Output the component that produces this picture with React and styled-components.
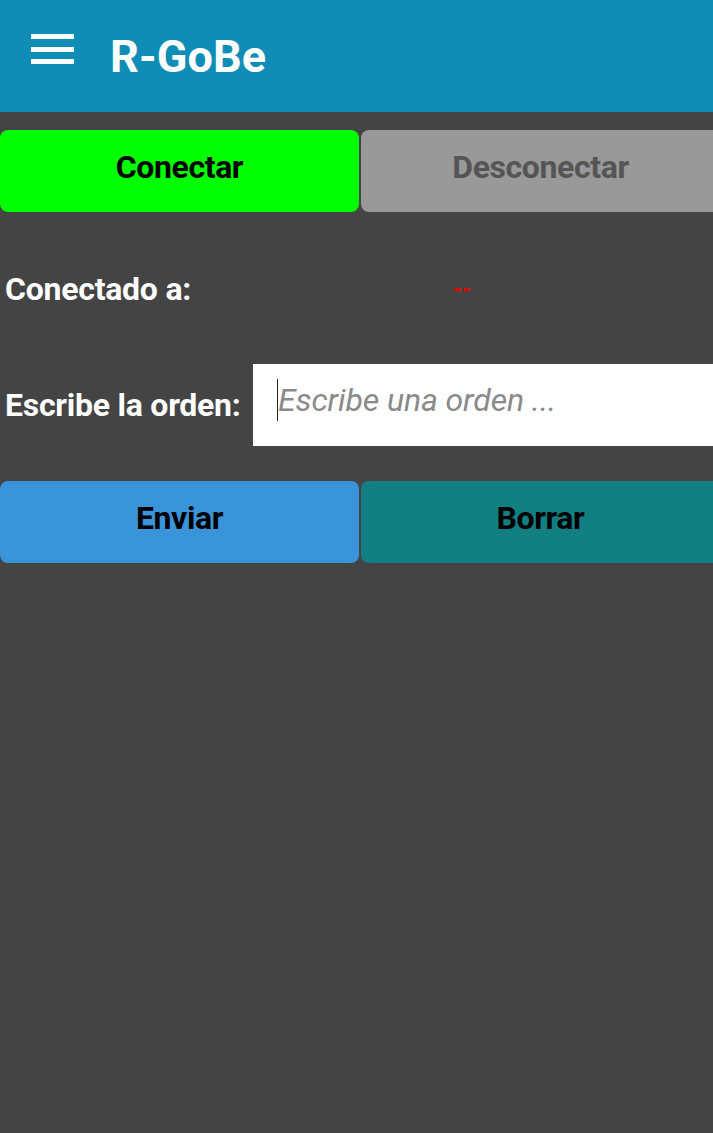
import React from "react";
import styled, { createGlobalStyle } from "styled-components";

const GlobalStyle = createGlobalStyle`
  html, body {
    margin: 0;
    padding: 0;
    background: #444444;
    font-family: Roboto, "Noto Sans", sans-serif;
  }
`;

const Screen = styled.div`
  width: 713px;
  height: 1133px;
  background: #444444;
  overflow: hidden;
`;

const AppBar = styled.header`
  height: 112px;
  background: #108db7;
  display: flex;
  align-items: center;
  padding-left: 31px;
  box-sizing: border-box;
`;

const MenuIcon = styled.div`
  width: 43px;
  display: flex;
  flex-direction: column;
  gap: 7.5px;
  margin-top: -14px;

  span {
    display: block;
    height: 5px;
    background: #ffffff;
  }
`;

const Title = styled.h1`
  margin: 0 0 0 36px;
  color: #ffffff;
  font-size: 45px;
  font-weight: 700;
  letter-spacing: 0.1px;
`;

const Content = styled.main`
  display: flex;
  flex-direction: column;
`;

const ButtonRow = styled.div`
  display: grid;
  grid-template-columns: 359px 359px;
  column-gap: 2px;
  margin-top: ${(p) => p.$top}px;
`;

const ActionButton = styled.button`
  height: 82px;
  border: none;
  border-radius: 8px;
  background: ${(p) => p.$bg};
  color: ${(p) => p.$fg || "#000000"};
  font-family: Roboto, sans-serif;
  font-size: 32px;
  font-weight: 700;
  letter-spacing: -0.4px;
  padding: 0 0 8px;
  cursor: pointer;
`;

const InfoRow = styled.div`
  display: flex;
  align-items: center;
  height: ${(p) => p.$h}px;
  margin-top: ${(p) => p.$top}px;
`;

const Label = styled.span`
  color: #ffffff;
  font-size: 32px;
  font-weight: 700;
  letter-spacing: -0.25px;
  padding-left: 5px;
  width: ${(p) => (p.$w ? `${p.$w}px` : "auto")};
  flex-shrink: 0;
`;

const DeviceName = styled.span`
  color: #ee0000;
  font-size: 23px;
  font-weight: 700;
  margin-left: 262px;
`;

const OrderField = styled.div`
  flex: 1;
  height: 82px;
  background: #ffffff;
  display: flex;
  align-items: center;
  padding-left: 24px;
  padding-bottom: 10px;
  box-sizing: border-box;
`;

const Caret = styled.span`
  width: 1px;
  height: 42px;
  background: #222222;
`;

const OrderInput = styled.input`
  border: none;
  outline: none;
  background: transparent;
  flex: 1;
  font-family: Roboto, sans-serif;
  font-size: 32px;
  font-style: italic;
  color: #333;
  padding: 0;
  letter-spacing: -0.1px;

  &::placeholder {
    color: #8a8a8a;
  }
`;

export default function App() {
  return (
    <>
      <GlobalStyle />
      <Screen>
        <AppBar>
          <MenuIcon>
            <span />
            <span />
            <span />
          </MenuIcon>
          <Title>R-GoBe</Title>
        </AppBar>
        <Content>
          <ButtonRow $top={18}>
            <ActionButton $bg="#00ff00">Conectar</ActionButton>
            <ActionButton $bg="#999999" $fg="#555555">
              Desconectar
            </ActionButton>
          </ButtonRow>
          <InfoRow $h={82} $top={36}>
            <Label>Conectado a:</Label>
            <DeviceName>--</DeviceName>
          </InfoRow>
          <InfoRow $h={82} $top={34}>
            <Label $w={248}>Escribe la orden:</Label>
            <OrderField>
              <Caret />
              <OrderInput placeholder="Escribe una orden ..." />
            </OrderField>
          </InfoRow>
          <ButtonRow $top={35}>
            <ActionButton $bg="#3a94da">Enviar</ActionButton>
            <ActionButton $bg="#128083">Borrar</ActionButton>
          </ButtonRow>
        </Content>
      </Screen>
    </>
  );
}
